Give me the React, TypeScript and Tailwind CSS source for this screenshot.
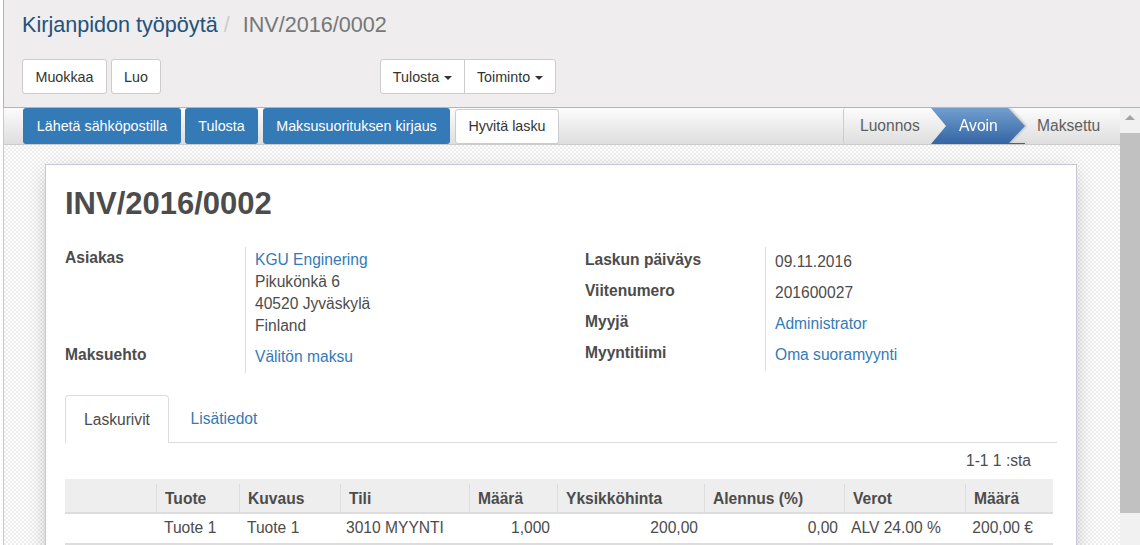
const FONT = "font-['Liberation_Sans',Arial,sans-serif]"

const headers = [
  { label: '', w: 'w-[91px]' },
  { label: 'Tuote', w: 'w-[83px]' },
  { label: 'Kuvaus', w: 'w-[101px]' },
  { label: 'Tili', w: 'w-[129px]' },
  { label: 'Määrä', w: 'w-[88px]' },
  { label: 'Yksikköhinta', w: 'w-[147px]' },
  { label: 'Alennus (%)', w: 'w-[140px]' },
  { label: 'Verot', w: 'w-[121px]' },
  { label: 'Määrä', w: 'w-[88px]' },
]

function Caret() {
  return <span className="ml-[5px] inline-block align-middle border-x-4 border-t-4 border-x-transparent border-t-[#333]" />
}

function Field({ label, children, h, pt = '' }: { label: string; children: React.ReactNode; h: string; pt?: string }) {
  return (
    <div className={`flex ${h}`}>
      <div className={`w-[180px] shrink-0 font-bold text-[#4c4c4c] ${pt}`}>{label}</div>
      <div className="flex-1 border-l border-[#ddd] pl-[9px]">{children}</div>
    </div>
  )
}

export default function App() {
  return (
    <div className={`${FONT} flex h-[545px] w-[1140px] flex-col overflow-hidden bg-white pl-[3px] text-[15.6px] leading-[22px] text-[#4c4c4c]`}>
      <div className="h-[108px] shrink-0 border-l border-b border-[#b4b4b4] bg-[#efeded] pl-[18px]">
        <div className="flex h-[50px] items-center text-[21.6px]">
          <span className="text-[#23527c]">Kirjanpidon työpöytä</span>
          <span className="ml-[6px] text-[#ccc]">/</span>
          <span className="ml-[13px] text-[#777]">INV/2016/0002</span>
        </div>
        <div className="mt-[9px] flex text-[14.3px]">
          <button className="h-[35px] w-[85px] rounded-[3px] border border-[#ccc] bg-white text-[#333]">Muokkaa</button>
          <button className="ml-[4px] h-[35px] w-[50px] rounded-[3px] border border-[#ccc] bg-white text-[#333]">Luo</button>
          <div className="ml-[219px] flex h-[35px] rounded-[3px] border border-[#ccc] bg-white text-[#333]">
            <button className="w-[83px]">Tulosta<Caret /></button>
            <button className="w-[91px] border-l border-[#ccc]">Toiminto<Caret /></button>
          </div>
        </div>
      </div>

      <div className="flex min-h-0 flex-1">
        <div className="flex min-w-0 flex-1 flex-col border-l border-[#c8c8d4]">
          <div className="flex h-[37px] shrink-0 items-center border-b border-[#ccc] bg-gradient-to-b from-[#fcfcfc] to-[#dedede] pl-[19px] pr-[7px] text-[14.3px]">
            <button className="h-[36px] w-[158px] rounded-[3px] bg-[#337ab7] text-white">Lähetä sähköpostilla</button>
            <button className="ml-[4px] h-[36px] w-[73px] rounded-[3px] bg-[#337ab7] text-white">Tulosta</button>
            <button className="ml-[5px] h-[36px] w-[187px] rounded-[3px] bg-[#337ab7] text-white">Maksusuorituksen kirjaus</button>
            <button className="ml-[5px] h-[35px] w-[104px] rounded-[3px] border border-[#ccc] bg-white text-[#333]">Hyvitä lasku</button>
            <div className="ml-auto flex h-[36px] text-[15.6px]">
              <div className="flex w-[88px] items-center rounded-l-[3px] border-l border-[#ccc] pl-[16px] text-[#5e5e5e]">Luonnos</div>
              <div className="relative w-[94px] [filter:drop-shadow(2px_0_1px_#c4c4c4)]">
                <div className="flex h-full items-center bg-gradient-to-b from-[#729fcf] to-[#3465a4] pl-[28px] text-white [clip-path:polygon(0_0,82%_0,100%_50%,82%_100%,0_100%,16%_50%)]">Avoin</div>
                <span className="absolute bottom-0 right-0 h-px w-[17px] bg-[#3465a4]" />
              </div>
              <div className="flex w-[88px] items-center pl-[12px] text-[#5e5e5e]">Maksettu</div>
            </div>
          </div>

          <div className="min-h-0 flex-1 bg-[repeating-conic-gradient(#ececec_0%_25%,#ffffff_0%_50%)] bg-[length:4px_4px] pl-[41px] pt-[19px]">
            <div className="h-[500px] w-[1032px] border border-[#c8c8d4] bg-white px-[19px] shadow-[0_5px_20px_-5px_rgba(0,0,0,0.3)]">
              <h1 className="mt-[21px] text-[31px] font-bold leading-[36px]">INV/2016/0002</h1>
              <div className="mt-[25px] flex">
                <div className="w-[520px]">
                  <Field label="Asiakas" h="h-[94px]">
                    <div className="pt-[2px] text-[#337ab7]">KGU Enginering</div>
                    <div>Pikukönkä 6</div>
                    <div>40520 Jyväskylä</div>
                    <div>Finland</div>
                  </Field>
                  <Field label="Maksuehto" h="h-[32px]" pt="pt-[3px]">
                    <div className="pt-[5px] text-[#337ab7]">Välitön maksu</div>
                  </Field>
                </div>
                <div className="w-[471px]">
                  <Field label="Laskun päiväys" h="h-[31px]" pt="pt-[2px]"><div className="pt-[4px]">09.11.2016</div></Field>
                  <Field label="Viitenumero" h="h-[31px]" pt="pt-[2px]"><div className="pt-[4px]">201600027</div></Field>
                  <Field label="Myyjä" h="h-[31px]" pt="pt-[2px]"><div className="pt-[4px] text-[#337ab7]">Administrator</div></Field>
                  <Field label="Myyntitiimi" h="h-[31px]" pt="pt-[2px]"><div className="pt-[4px] text-[#337ab7]">Oma suoramyynti</div></Field>
                </div>
              </div>
              <div className="mt-[22px] flex h-[48px] border-b border-[#ddd]">
                <div className="flex h-[48px] w-[104px] items-center justify-center rounded-t-[4px] border-x border-t border-[#ddd] bg-white">Laskurivit</div>
                <div className="flex w-[110px] items-center justify-center text-[#337ab7]">Lisätiedot</div>
              </div>
              <div className="flex h-[36px] items-center pl-[901px]">1-1 1 :sta</div>
              <div className="flex h-[35px] w-[988px] items-end border-b-2 border-[#ddd] bg-[#eee] font-bold">
                {headers.map((h, i) => (
                  <div key={i} className={`${h.w} flex h-[28px] shrink-0 items-center pl-[8px] pt-[2px] ${i > 0 ? 'border-l border-[#ddd]' : ''}`}>{h.label}</div>
                ))}
              </div>
              <div className="flex h-[31px] w-[988px] items-center border-b-2 border-[#ddd] pb-[2px]">
                <div className="w-[99px] shrink-0" />
                <div className="w-[83px] shrink-0">Tuote 1</div>
                <div className="w-[99px] shrink-0">Tuote 1</div>
                <div className="w-[124px] shrink-0">3010 MYYNTI</div>
                <div className="w-[80px] shrink-0 text-right">1,000</div>
                <div className="w-[148px] shrink-0 text-right">200,00</div>
                <div className="w-[140px] shrink-0 text-right">0,00</div>
                <div className="w-[113px] shrink-0 pl-[13px]">ALV 24.00 %</div>
                <div className="w-[82px] shrink-0 text-right">200,00 €</div>
              </div>
            </div>
          </div>
        </div>

        <div className="flex w-[20px] shrink-0 flex-col bg-[#f1f1f1]">
          <div className="flex h-[25px] items-start justify-center pt-[7px]">
            <span className="border-x-[5px] border-b-[5px] border-x-transparent border-b-[#a3a3a3]" />
          </div>
          <div className="h-[380px] bg-[#c1c1c1]" />
        </div>
      </div>
    </div>
  )
}
